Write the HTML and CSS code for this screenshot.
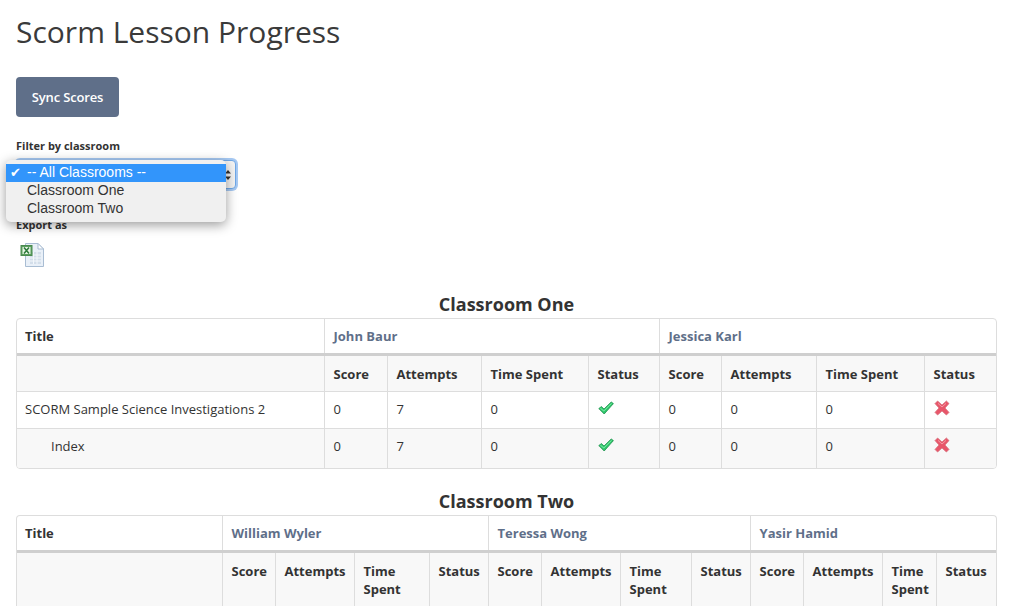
FILE: index.html
```html
<!DOCTYPE html>
<html lang="en">
<head>
  <meta charset="UTF-8" />
  <title>Scorm Lesson Progress</title>
  <link rel="stylesheet" href="styles.css">
</head>
<body>

  <svg class="icon-defs" width="0" height="0">
    <symbol id="icon-check" viewBox="0 0 16 14">
      <path d="M0.8 7.6 L3.4 5.6 L6 8 L13.2 1 L15.4 2.6 L6.2 13 Z" fill="#2fc76c" stroke="#1c8f4a" stroke-width="0.8" stroke-linejoin="round"/>
      <path d="M2.4 7.2 L5.8 10 L13.4 2.4" fill="none" stroke="#8af0ae" stroke-width="0.9"/>
    </symbol>
    <symbol id="icon-cross" viewBox="0 0 16 16">
      <path d="M3.6 1 L8 5 L12.4 1 L15 3.6 L11 8 L15 12.4 L12.4 15 L8 11 L3.6 15 L1 12.4 L5 8 L1 3.6 Z" fill="#e8566a" stroke="#d8737f" stroke-width="0.8" stroke-linejoin="round"/>
      <path d="M4 3.4 L8 7 L12 3.4" fill="none" stroke="#f59aa4" stroke-width="1"/>
    </symbol>
  </svg>

  <h1>Scorm Lesson Progress</h1>

  <button class="sync-btn">Sync Scores</button>

  <label class="field-label filter-label">Filter by classroom</label>
  <div class="select-wrap">
    <div class="select-box">
      <svg class="select-arrows" width="8" height="14" viewBox="0 0 8 14">
        <path d="M1 5.5 L4 2 L7 5.5 Z M1 8.5 L4 12 L7 8.5 Z" fill="#333"/>
      </svg>
    </div>
    <ul class="select-menu">
      <li class="selected"><span class="tick">✔</span>-- All Classrooms --</li>
      <li>Classroom One</li>
      <li>Classroom Two</li>
    </ul>
  </div>

  <label class="field-label export-label">Export as</label>
  <a class="export-link" href="#">
    <svg width="26" height="26" viewBox="0 0 26 26">
      <path d="M6.5 1.5 H19 L24.5 7 V24.5 H6.5 Z" fill="#e9f0f8" stroke="#a9bdd3"/>
      <path d="M19 1.5 V7 H24.5 Z" fill="#fff" stroke="#a9bdd3"/>
      <path d="M11 10 H22 V22 H11 Z" fill="#d3deea"/>
      <path d="M11 13 H22 M11 16 H22 M11 19 H22 M14.5 10 V22 M18 10 V22" stroke="#f3f7fb" stroke-width="1"/>
      <rect x="2" y="3.5" width="11" height="10" fill="#5a9f5e" stroke="#4a8a50"/>
      <rect x="3.5" y="5" width="8" height="7" fill="#e6f3e4"/>
      <path d="M5 5.5 L10 11.5 M10 5.5 L5 11.5" stroke="#2c7a3a" stroke-width="1.5"/>
    </svg>
  </a>

  <h2>Classroom One</h2>
  <div class="table-wrap">
    <table class="one">
      <colgroup>
        <col class="c1"><col class="c2"><col class="c3"><col class="c4"><col class="c5">
        <col class="c6"><col class="c7"><col class="c8"><col class="c9">
      </colgroup>
      <thead>
        <tr>
          <th>Title</th>
          <th colspan="4" class="learner">John Baur</th>
          <th colspan="4" class="learner">Jessica Karl</th>
        </tr>
      </thead>
      <tbody>
        <tr class="shade sub">
          <th></th>
          <th>Score</th><th>Attempts</th><th>Time Spent</th><th>Status</th>
          <th>Score</th><th>Attempts</th><th>Time Spent</th><th>Status</th>
        </tr>
        <tr>
          <td>SCORM Sample Science Investigations 2</td>
          <td>0</td><td>7</td><td>0</td>
          <td><svg class="status"><use href="#icon-check"/></svg></td>
          <td>0</td><td>0</td><td>0</td>
          <td><svg class="status"><use href="#icon-cross"/></svg></td>
        </tr>
        <tr class="shade last">
          <td class="indent">Index</td>
          <td>0</td><td>7</td><td>0</td>
          <td><svg class="status"><use href="#icon-check"/></svg></td>
          <td>0</td><td>0</td><td>0</td>
          <td><svg class="status"><use href="#icon-cross"/></svg></td>
        </tr>
      </tbody>
    </table>
  </div>

  <h2>Classroom Two</h2>
  <div class="table-wrap open-bottom">
    <table class="two">
      <colgroup>
        <col class="c1"><col class="c2"><col class="c3"><col class="c4"><col class="c5">
        <col class="c6"><col class="c7"><col class="c8"><col class="c9">
        <col class="c10"><col class="c11"><col class="c12"><col class="c13">
      </colgroup>
      <thead>
        <tr>
          <th>Title</th>
          <th colspan="4" class="learner">William Wyler</th>
          <th colspan="4" class="learner">Teressa Wong</th>
          <th colspan="4" class="learner">Yasir Hamid</th>
        </tr>
      </thead>
      <tbody>
        <tr class="shade sub">
          <th></th>
          <th>Score</th><th>Attempts</th><th>Time Spent</th><th>Status</th>
          <th>Score</th><th>Attempts</th><th>Time Spent</th><th>Status</th>
          <th>Score</th><th>Attempts</th><th>Time Spent</th><th>Status</th>
        </tr>
      </tbody>
    </table>
  </div>

</body>
</html>
```

FILE: styles.css
```css
* { box-sizing: border-box; margin: 0; padding: 0; }

html { overflow: hidden; }

body {
  font-family: "Open Sans", sans-serif;
  font-size: 13px;
  line-height: 18px;
  color: #333;
  background: #fff;
  padding: 0 13px 0 16px;
}

.icon-defs { position: absolute; }

h1 {
  font-size: 30px;
  font-weight: 400;
  line-height: 38px;
  padding-top: 13px;
  color: #3a3a3a;
}

.sync-btn {
  display: block;
  width: 103px;
  height: 40px;
  margin-top: 26px;
  background: #5f6f89;
  color: #fff;
  border: none;
  border-radius: 4px;
  font-family: inherit;
  font-size: 13px;
  font-weight: 600;
  letter-spacing: -0.15px;
}

.field-label {
  display: block;
  font-size: 11px;
  font-weight: 700;
  line-height: 16px;
  color: #333;
}

.filter-label { margin-top: 21px; }

.select-wrap {
  position: relative;
  width: 220px;
  height: 29px;
  margin-top: 6px;
}

.select-box {
  height: 29px;
  background: #f4f4f4;
  border: 1px solid #6fa8e8;
  border-radius: 4px;
  box-shadow: 0 0 0 2px #a6c9f3;
  display: flex;
  align-items: center;
  justify-content: flex-end;
  padding-right: 3px;
}

.select-menu {
  position: absolute;
  top: 0;
  left: -10px;
  width: 220px;
  padding: 4px 0;
  list-style: none;
  background: #f0f0f0;
  border-radius: 5px;
  box-shadow: 0 3px 12px rgba(0, 0, 0, 0.4);
  font-family: "Liberation Sans", sans-serif;
  font-size: 14px;
  line-height: 17px;
  color: #333;
}

.select-menu li { padding: 0 0 1px 21px; position: relative; }

.select-menu .selected { background: #3295fb; color: #fff; }

.tick {
  position: absolute;
  left: 4px;
  font-family: "DejaVu Sans", sans-serif;
  font-size: 13px;
}

.export-label { margin-top: 28px; }

.export-link { display: block; margin-top: 9px; height: 28px; padding-left: 3px; }

h2 {
  font-size: 18px;
  font-weight: 700;
  line-height: 24px;
  text-align: center;
  color: #333;
  margin-top: 22px;
  margin-bottom: 2px;
}

.table-wrap + h2 { margin-top: 20px; }

.table-wrap {
  border: 1px solid #ddd;
  border-radius: 4px;
  overflow: hidden;
  width: 981px;
}

.open-bottom { border-bottom: none; border-radius: 4px 4px 0 0; }

table {
  width: 979px;
  table-layout: fixed;
  border-collapse: collapse;
}

th, td {
  text-align: left;
  padding: 8px 8px 10px 9px;
  border-left: 1px solid #ddd;
  border-top: 1px solid #ddd;
  vertical-align: top;
}

th:first-child, td:first-child { border-left: none; padding-left: 8px; }

thead th {
  border-top: none;
  border-bottom: 3px solid #cfcfcf;
  padding-top: 8px;
  padding-bottom: 8px;
}

tbody .sub th { border-top: none; font-weight: 700; padding-top: 9px; padding-bottom: 8px; }

th { font-weight: 700; }

.learner { color: #5f6f89; }

.shade { background: #f8f8f8; }

.last td { padding-bottom: 13px; }

td.indent { padding-left: 34px; }

.status { width: 16px; height: 16px; display: block; }

.one .c1 { width: 307px; }
.one .c2 { width: 63px; }
.one .c3 { width: 94px; }
.one .c4 { width: 107px; }
.one .c5 { width: 71px; }
.one .c6 { width: 62px; }
.one .c7 { width: 95px; }
.one .c8 { width: 108px; }
.one .c9 { width: 72px; }

.two .c1 { width: 205px; }
.two .c2 { width: 53px; }
.two .c3 { width: 79px; }
.two .c4 { width: 75px; }
.two .c5 { width: 59px; }
.two .c6 { width: 53px; }
.two .c7 { width: 79px; }
.two .c8 { width: 71px; }
.two .c9 { width: 59px; }
.two .c10 { width: 53px; }
.two .c11 { width: 79px; }
.two .c12 { width: 54px; }
.two .c13 { width: 60px; }
```
